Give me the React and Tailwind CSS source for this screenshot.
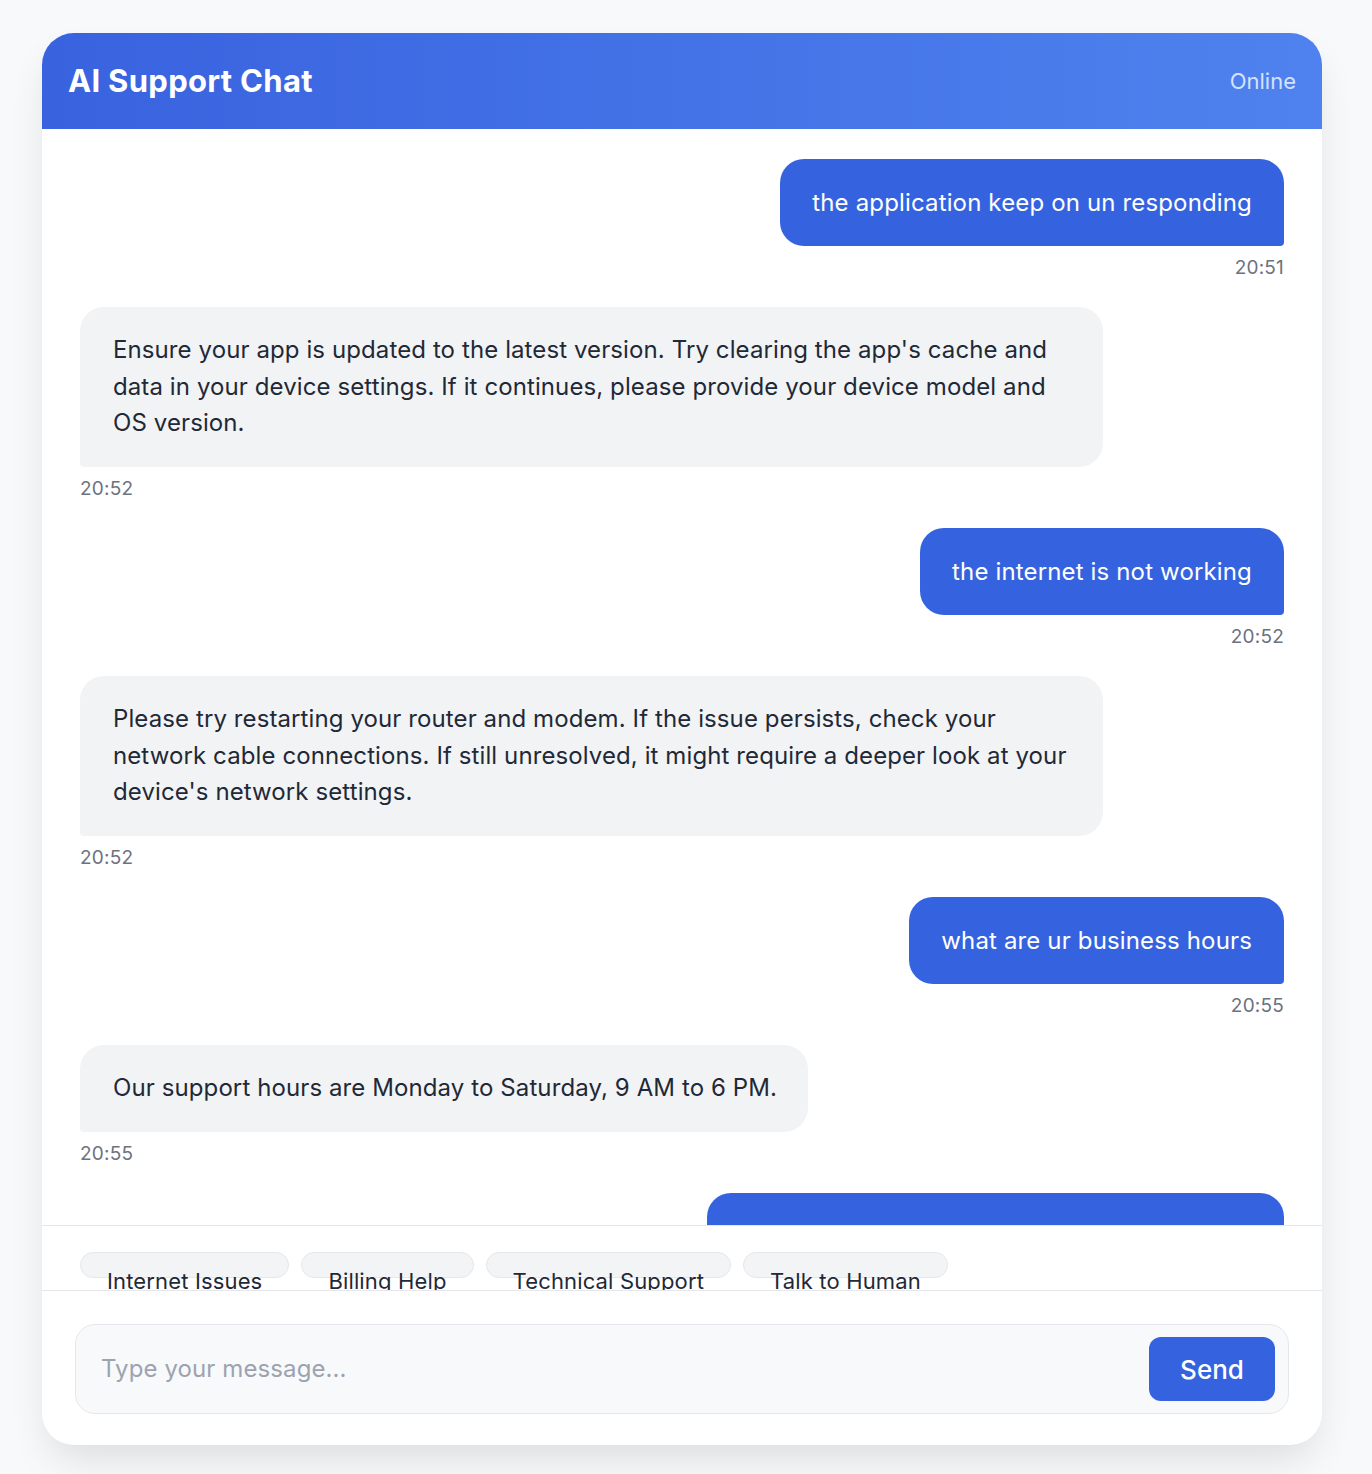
import { useState } from 'react'

const messages = [
  { id: 1, from: 'user', text: 'the application keep on un responding', time: '20:51' },
  {
    id: 2,
    from: 'bot',
    text: "Ensure your app is updated to the latest version. Try clearing the app's cache and data in your device settings. If it continues, please provide your device model and OS version.",
    time: '20:52',
  },
  { id: 3, from: 'user', text: 'the internet is not working', time: '20:52' },
  {
    id: 4,
    from: 'bot',
    text: "Please try restarting your router and modem. If the issue persists, check your network cable connections. If still unresolved, it might require a deeper look at your device's network settings.",
    time: '20:52',
  },
  { id: 5, from: 'user', text: 'what are ur business hours', time: '20:55' },
  { id: 6, from: 'bot', text: 'Our support hours are Monday to Saturday, 9 AM to 6 PM.', time: '20:55' },
  { id: 7, from: 'user', text: 'i want to speak to a real person about my bill', time: '20:56' },
]

const quickReplies = ['Internet Issues', 'Billing Help', 'Technical Support', 'Talk to Human']

export default function App() {
  const [input, setInput] = useState('')

  return (
    <div
      className="min-h-[1474px] bg-[#f8f9fb] pt-[33px]"
      style={{ fontFamily: 'Inter, "Noto Sans", sans-serif' }}
    >
      <div className="mx-[42px] w-[1280px] rounded-[32px] bg-white overflow-hidden shadow-[0_20px_40px_-8px_rgba(0,0,0,0.12)]">
        {/* header */}
        <div className="h-[96px] px-[26px] flex items-center justify-between bg-linear-to-r from-[#3962df] to-[#4f82ee]">
          <h1 className="text-[31px] font-bold tracking-[0.3px] text-white">AI Support Chat</h1>
          <span className="text-[22px] text-[#d4e2ff]">Online</span>
        </div>

        {/* messages */}
        <div className="h-[1096px] overflow-hidden px-[38px] pt-[30px]">
          {messages.map((m) => (
            <div
              key={m.id}
              className={`flex flex-col mb-[26px] ${m.from === 'user' ? 'items-end' : 'items-start'}`}
            >
              <div
                className={
                  m.from === 'user'
                    ? 'bg-[#3563e0] text-white rounded-[24px] rounded-br-[4px] px-[32px] py-[25px] text-[24px] leading-[37px] tracking-[0.15px] max-w-[85%]'
                    : 'bg-[#f2f3f5] text-[#1f2937] rounded-[24px] rounded-bl-[4px] pl-[33px] pr-[31px] py-[25px] text-[24px] leading-[36.67px] tracking-[0.1px] max-w-[85%]'
                }
              >
                {m.text}
              </div>
              <span className="mt-[8px] text-[19px] leading-[27px] tracking-[0.2px] text-[#6b7280]">{m.time}</span>
            </div>
          ))}
        </div>

        {/* quick replies */}
        <div className="h-[66px] border-t border-b border-[#e5e7eb] overflow-hidden px-[38px] pt-[26px] flex gap-[12px]">
          {quickReplies.map((q) => (
            <button
              key={q}
              className="h-[26px] shrink-0 rounded-full bg-[#f3f4f6] border border-[#e5e7eb] px-[26px] pt-[12px] text-[22px] leading-[33px] tracking-[0.15px] text-[#1f2937] flex items-start whitespace-nowrap"
            >
              {q}
            </button>
          ))}
        </div>

        {/* input */}
        <div className="px-[33px] pt-[33px] pb-[31px]">
          <div className="h-[90px] rounded-[20px] border border-[#e5e7eb] bg-[#f8f9fa] flex items-center pl-[25px] pr-[13px]">
            <input
              value={input}
              onChange={(e) => setInput(e.target.value)}
              placeholder="Type your message..."
              className="flex-1 bg-transparent outline-none text-[24px] tracking-[0.1px] text-[#1f2937] placeholder:text-[#9ca3af]"
            />
            <button className="w-[126px] h-[64px] rounded-[12px] bg-[#3563e0] text-white text-[26px] font-medium">
              Send
            </button>
          </div>
        </div>
      </div>
    </div>
  )
}
